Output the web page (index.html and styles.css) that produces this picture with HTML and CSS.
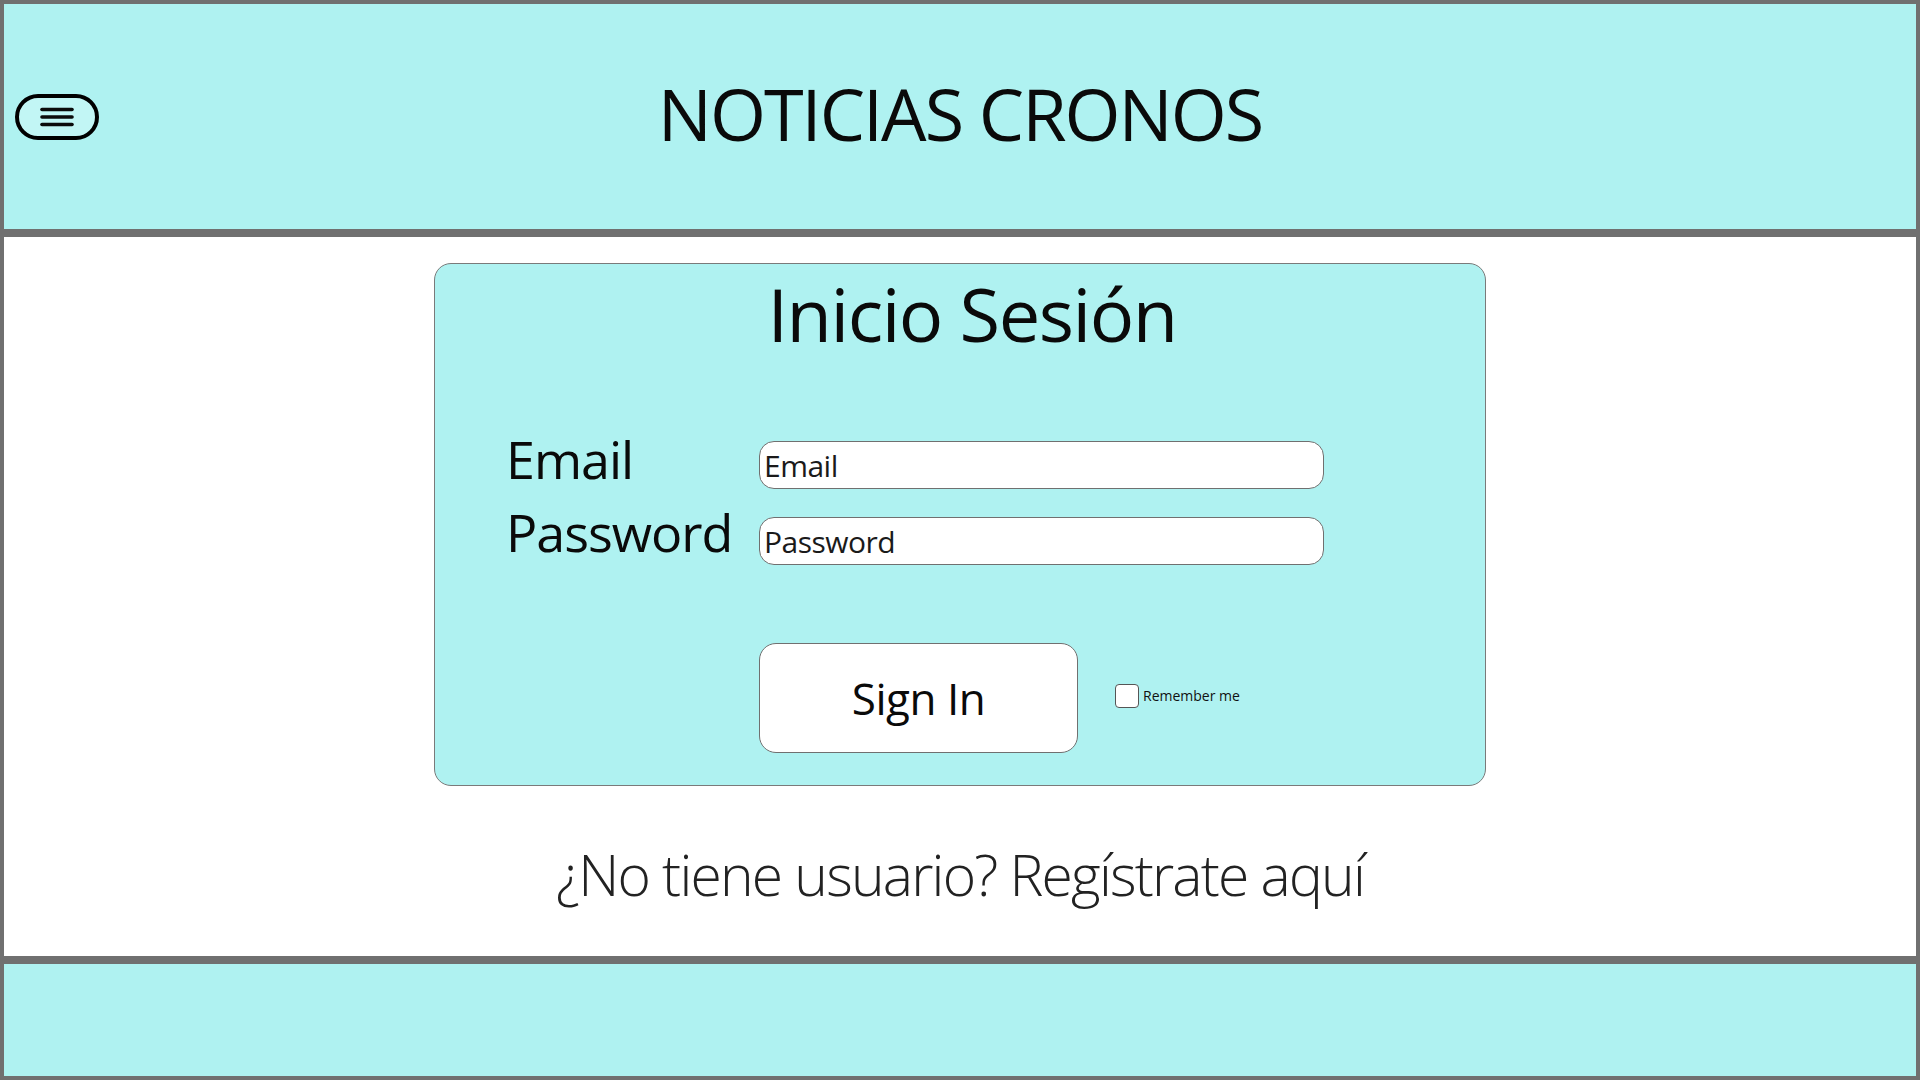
FILE: index.html
```html
<!DOCTYPE html>
<html lang="es">
<head>
<meta charset="utf-8">
<title>Noticias Cronos - Inicio Sesión</title>
<link rel="stylesheet" href="styles.css">
</head>
<body>
<header class="site-header">
  <button class="menu-btn" type="button" aria-label="Menú">
    <svg width="34" height="20" viewBox="0 0 34 20" aria-hidden="true">
      <line x1="2" y1="2.5" x2="32" y2="2.5"/>
      <line x1="2" y1="10" x2="32" y2="10"/>
      <line x1="2" y1="17.5" x2="32" y2="17.5"/>
    </svg>
  </button>
  <h1 class="site-title">NOTICIAS CRONOS</h1>
  <div class="spacer"></div>
</header>
<main class="site-main">
  <section class="login-card">
    <h2 class="login-title">Inicio Sesión</h2>
    <div class="form-row first">
      <label class="field-label" for="email">Email</label>
      <input class="field-input" id="email" type="email" placeholder="Email">
    </div>
    <div class="form-row second">
      <label class="field-label" for="password">Password</label>
      <input class="field-input" id="password" type="password" placeholder="Password">
    </div>
    <div class="action-row">
      <button class="signin-btn" type="button">Sign In</button>
      <label class="remember">
        <input class="remember-box" type="checkbox">
        <span>Remember me</span>
      </label>
    </div>
  </section>
  <p class="register-link">¿No tiene usuario? Regístrate aquí</p>
</main>
<footer class="site-footer"></footer>
</body>
</html>
```
FILE: styles.css
```css
* { box-sizing: border-box; }
html, body { margin: 0; padding: 0; }
body {
  width: 1920px;
  height: 1080px;
  font-family: "Open Sans", "Noto Sans", sans-serif;
  color: #0a0a0a;
  background: #ffffff;
}
.site-header {
  height: 233px;
  border: 4px solid #707070;
  background: #aff2f1;
  display: grid;
  grid-template-columns: 1fr auto 1fr;
  align-items: center;
  padding: 0 11px;
}
.menu-btn {
  width: 84px;
  height: 46px;
  border: 4px solid #000;
  border-radius: 23px;
  background: #c2f6f5;
  display: flex;
  align-items: center;
  justify-content: center;
  padding: 0;
  justify-self: start;
}
.menu-btn svg line {
  stroke: #0b0b0b;
  stroke-width: 3.6;
  stroke-linecap: round;
}
.site-title {
  margin: 0 0 8px 0;
  font-weight: 400;
  font-size: 72px;
  letter-spacing: -2px;
  line-height: 98px;
  color: #0a0a0a;
}
.site-main {
  height: 727px;
  border: 4px solid #707070;
  padding-top: 26px;
  background: #fff;
}
.login-card {
  width: 1052px;
  height: 523px;
  margin: 0 auto;
  background: #aff2f1;
  border: 1px solid #7a7a7a;
  border-radius: 17px;
  padding-left: 71px;
  display: flex;
  flex-direction: column;
}
.login-title {
  margin: 0 0 0 -71px;
  padding-left: 24px;
  text-align: center;
  font-weight: 400;
  font-size: 74px;
  letter-spacing: -1.5px;
  line-height: 100px;
  color: #0a0a0a;
}
.form-row {
  display: flex;
  align-items: flex-start;
}
.form-row.first { margin-top: 77px; }
.form-row.second { margin-top: 28px; }
.field-label {
  width: 253px;
  font-size: 52px;
  letter-spacing: -1px;
  line-height: 36px;
  color: #0a0a0a;
}
.form-row.second .field-label { margin-top: -3px; }
.field-input {
  width: 565px;
  height: 48px;
  border: 1px solid #707070;
  border-radius: 15px;
  background: #fff;
  padding: 0 0 0 4px;
  font-family: "Open Sans", "Noto Sans", sans-serif;
  font-size: 30px;
  letter-spacing: -0.5px;
  color: #1a1a1a;
  outline: none;
}
.field-input::placeholder { color: #1a1a1a; opacity: 1; }
.action-row {
  display: flex;
  align-items: center;
  margin-top: 78px;
  padding-left: 253px;
}
.signin-btn {
  width: 319px;
  height: 110px;
  background: #fff;
  border: 1px solid #707070;
  border-radius: 17px;
  font-family: "Open Sans", "Noto Sans", sans-serif;
  font-size: 44px;
  letter-spacing: -0.5px;
  color: #0a0a0a;
  padding: 0;
}
.remember {
  display: flex;
  align-items: center;
  margin-left: 37px;
  margin-top: -5px;
  font-size: 14px;
  color: #111;
}
.remember-box {
  appearance: none;
  -webkit-appearance: none;
  width: 24px;
  height: 24px;
  margin: 0 4px 0 0;
  border: 1px solid #555;
  border-radius: 4px;
  background: #fff;
}
.register-link {
  margin: 50px 0 0 0;
  text-align: center;
  font-size: 57px;
  font-weight: 300;
  letter-spacing: -1.8px;
  line-height: 76px;
  color: #222;
}
.site-footer {
  height: 120px;
  border: 4px solid #707070;
  background: #aff2f1;
}
```
